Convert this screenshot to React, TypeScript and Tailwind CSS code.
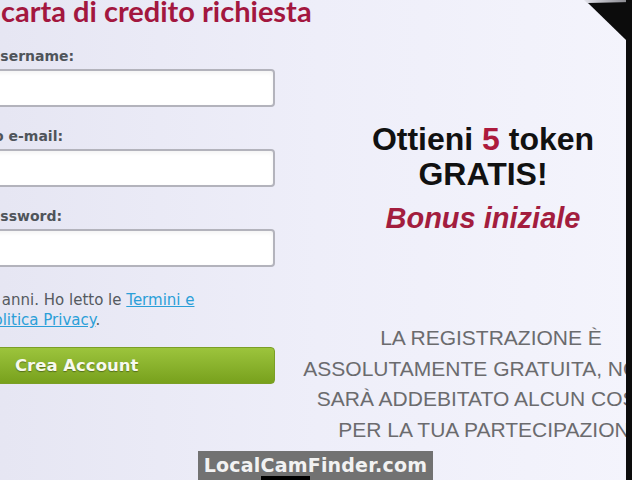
export default function App() {
  const labelClass =
    "h-[18px] whitespace-nowrap font-['DejaVu_Sans',sans-serif] text-[14px] leading-[18px] font-bold text-[#4f545a]";
  const inputClass =
    "mt-[4px] h-[38px] w-full rounded-[4px] border-2 border-[#b3b3bc] bg-white shadow-inner";

  return (
    <div className="relative flex h-[480px] w-[632px] overflow-hidden bg-linear-to-r from-[#e6e6f3] via-[#eeeef9] to-[#f4f4fc]">
      {/* form column, cropped on the left */}
      <div className="flex w-[300px] shrink-0 flex-col">
        <h1 className="mt-[-4px] whitespace-nowrap pl-[1px] font-['Lato',sans-serif] text-[29px] leading-[30px] font-bold text-[#a3173f]">
          carta di credito richiesta
        </h1>

        <div className="ml-[-20px] mt-[21px] flex w-[295px] flex-col">
          <label className={`${labelClass} ml-[9px]`}>Username:</label>
          <input type="text" className={inputClass} />

          <label className={`${labelClass} ml-[-44px] mt-[20px]`}>Indirizzo e-mail:</label>
          <input type="text" className={inputClass} />

          <label className={`${labelClass} ml-[1px] mt-[20px]`}>Password:</label>
          <input type="password" className={inputClass} />
        </div>

        <div className="mt-[23px] font-['DejaVu_Sans',sans-serif] text-[15px] leading-[20px] text-[#555a60]">
          <div className="ml-[-22px] whitespace-nowrap">
            18 anni. Ho letto le{" "}
            <a className="text-[#2b9fd8] underline">Termini e</a>
          </div>
          <div className="ml-[-15px] whitespace-nowrap">
            <a className="text-[#2b9fd8] underline">Politica Privacy</a>.
          </div>
        </div>

        <button
          type="button"
          className="ml-[-20px] mt-[17px] h-[37px] w-[295px] rounded-[4px] border border-[#7b9f26] bg-linear-to-b from-[#9cc43c] to-[#78a11c] pl-[34px] text-left font-['DejaVu_Sans',sans-serif] text-[16.5px] leading-[35px] font-bold text-[#f7f9ee] [text-shadow:0_1px_1px_rgba(0,0,0,0.35)]"
        >
          Crea Account
        </button>
      </div>

      {/* bonus panel */}
      <div className="flex min-w-0 flex-1 flex-col overflow-hidden pt-[122px]">
        <div className="w-[366px] shrink-0 text-center font-['Liberation_Sans',Arial,sans-serif] text-[#111]">
          <div className="text-[32px] leading-[35px] font-bold">
            Ottieni <span className="text-[#ad1a3d]">5</span> token
          </div>
          <div className="text-[32px] leading-[35px] font-bold">GRATIS!</div>
          <div className="mt-[6px] text-[29px] leading-[40px] font-bold italic text-[#a31d3e]">
            Bonus iniziale
          </div>
        </div>

        <div className="mt-[85px] w-[382px] shrink-0 text-center font-['Liberation_Sans',Arial,sans-serif] text-[21px] leading-[30.5px] text-[#6b6b6e]">
          <div className="whitespace-nowrap">LA REGISTRAZIONE È</div>
          <div className="whitespace-nowrap">ASSOLUTAMENTE GRATUITA, NON TI</div>
          <div className="whitespace-nowrap">SARÀ ADDEBITATO ALCUN COSTO</div>
          <div className="whitespace-nowrap">PER LA TUA PARTECIPAZIONE</div>
        </div>
      </div>

      {/* dark frame edge */}
      <div className="w-[6px] shrink-0 bg-[#0c0c0c]" />

      {/* page corner */}
      <svg
        className="absolute right-0 top-0"
        width="50"
        height="46"
        viewBox="0 0 50 46"
      >
        <defs>
          <linearGradient id="band" x1="0" x2="1" y1="0" y2="0">
            <stop offset="0" stopColor="#e4e4ec" />
            <stop offset="1" stopColor="#8a8a90" />
          </linearGradient>
        </defs>
        <polygon points="2,0 44,0 44,3 6,4" fill="url(#band)" />
        <polygon points="6,3 50,2 50,44 44,40" fill="#0c0c0c" />
      </svg>

      {/* watermark */}
      <div className="absolute bottom-0 left-[198px] h-[29px] w-[235px] bg-[#727272]">
        <div className="text-center font-['DejaVu_Sans',sans-serif] text-[19px] leading-[28px] font-bold tracking-[0.2px] text-[#f2f2f2]">
          LocalCamFinder.com
        </div>
        <div className="absolute bottom-0 left-[63px] h-[4px] w-[49px] bg-black" />
      </div>
    </div>
  );
}
